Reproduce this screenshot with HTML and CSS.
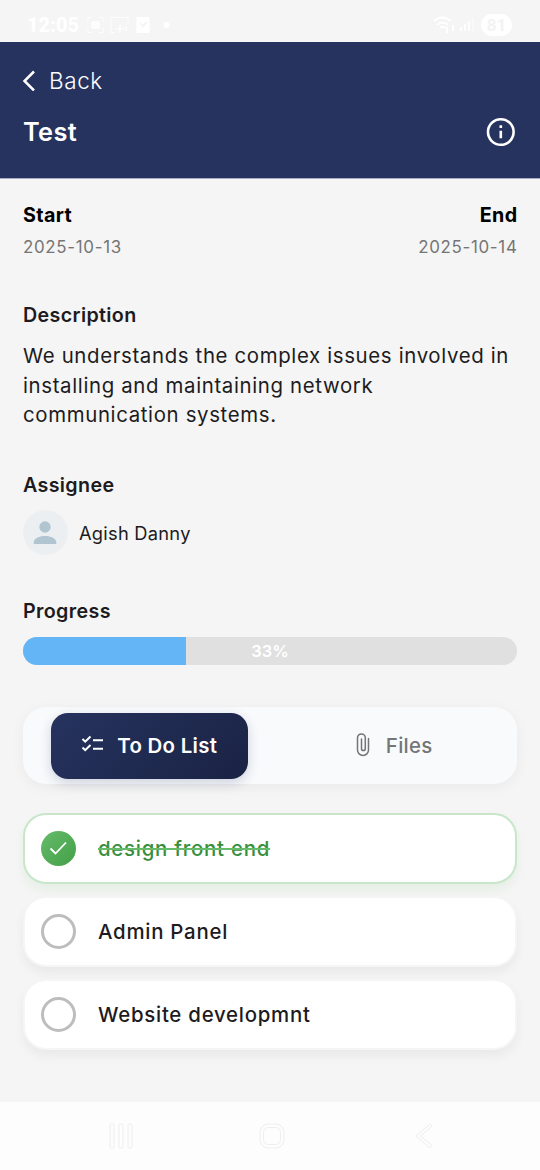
FILE: index.html
```html
<!DOCTYPE html>
<html lang="en">
<head>
<meta charset="utf-8">
<title>Test</title>
<link rel="stylesheet" href="styles.css">
</head>
<body>
<div class="status">
  <span class="clock">12:05</span>
  <svg class="status-icons" width="86" height="20" viewBox="0 0 86 20" fill="none" stroke="#fff" stroke-width="1.200">
    <g opacity=".8"><path d="M2 7V2.500h4M13 2.500h4V7M2 13v4.500h4M13 17.500h4V13"/><rect x="5.500" y="6.500" width="8" height="7" rx="2" fill="#fff"/>
    <path d="M25 14V2.500h17V9M25 14v3.500h4"/><path d="M34 10v8M30 14h8M40 11v5" stroke-width="1.700"/></g>
    <rect x="51" y="2.500" width="12" height="15" rx="1" fill="#fff"/><path d="M54 8l3 3 4-4" stroke="#f5f5f5" stroke-width="2"/>
    <circle cx="80.500" cy="10" r="2.500" fill="#fff"/>
  </svg>
  <span class="grow"></span>
  <svg class="signal" width="42" height="20" viewBox="0 0 42 20" fill="none" stroke="#fff" stroke-width="1.800">
    <path d="M1 6q8-7 17 0M4 10q5.500-5 11 0M7 13q3-2.500 6 0"/><path d="M14 12v6M20 10v6M28 12v4M32 9v7M36 6v10" /><path d="M40 3v13" opacity=".5"/>
  </svg>
  <span class="battery">81</span>
</div>
<header class="header">
  <div class="back">
    <svg width="14" height="22" viewBox="0 0 14 22" fill="none" stroke="#fff" stroke-width="2.500"><path d="M12 2.500L2.500 12l9.500 9.500"/></svg>
    <span>Back</span>
  </div>
  <div class="title-row">
    <h1 class="title">Test</h1>
    <svg width="30" height="30" viewBox="0 0 30 30" fill="none" stroke="#fff" stroke-width="2.600"><circle cx="14.800" cy="15" r="12.800"/><path d="M14.800 13.700v7.600M14.800 8.300v2.800"/></svg>
  </div>
</header>
<main class="main">
  <section class="dates">
    <div><h2 class="date-label">Start</h2><p class="date">2025-10-13</p></div>
    <div class="end"><h2 class="date-label">End</h2><p class="date">2025-10-14</p></div>
  </section>
  <section class="description">
    <h2 class="label">Description</h2>
    <p class="copy">We understands the complex issues involved in installing and maintaining network communication systems.</p>
  </section>
  <section class="assignee">
    <h2 class="label">Assignee</h2>
    <div class="person">
      <span class="avatar"><svg width="24" height="24" viewBox="0 0 24 24" fill="#b0c5cf"><circle cx="12" cy="6" r="5.700"/><path d="M.7 23v-1.500C.7 17.500 6 15 12 15s11.300 2.500 11.300 6.500V23z"/></svg></span>
      <span class="name">Agish Danny</span>
    </div>
  </section>
  <section class="progress">
    <h2 class="label">Progress</h2>
    <div class="bar"><div class="fill" style="width:33%"></div><span class="percent">33%</span></div>
  </section>
  <nav class="tabs">
    <div class="tab active">
      <svg width="24" height="20" viewBox="0 0 24 20" fill="none" stroke="#fff" stroke-width="2"><path d="M1.500 4l2.700 2.700L9.500 1.500M1.500 12.500l2.700 2.700L9.500 10M12 5.300H22M12 13.700H22"/></svg>
      <span>To Do List</span>
    </div>
    <div class="tab">
      <svg width="16" height="26" viewBox="0 0 16 26" fill="none" stroke="#757575" stroke-width="1.500" stroke-linecap="round"><path d="M13.500 6.500v11.500a5.500 5.500 0 0 1-11 0V5.800a3.900 3.900 0 0 1 7.800 0v10.900a1.900 1.900 0 0 1-3.800 0V7"/></svg>
      <span>Files</span>
    </div>
  </nav>
  <ul class="todos">
    <li class="todo done"><span class="check"><svg width="34" height="34" viewBox="0 0 34 34" fill="none" stroke="#fff" stroke-width="1.800"><path d="M9.500 17.500l5 5L25 11.500"/></svg></span><span class="task">design front end</span></li>
    <li class="todo"><span class="check"></span><span class="task">Admin Panel</span></li>
    <li class="todo"><span class="check"></span><span class="task">Website developmnt</span></li>
  </ul>
</main>
<footer class="navbar">
  <svg width="26" height="28" viewBox="0 0 26 28" fill="none" stroke="#eee"><rect x="2" y="2" width="4" height="24" rx="1.500"/><rect x="11" y="2" width="4" height="24" rx="1.500"/><rect x="20" y="2" width="4" height="24" rx="1.500"/></svg>
  <svg class="home" width="28" height="28" viewBox="0 0 28 28" fill="none" stroke="#eee"><rect x="2" y="2" width="24" height="24" rx="8"/><rect x="5.500" y="5.500" width="17" height="17" rx="5"/></svg>
  <svg width="20" height="28" viewBox="0 0 20 28" fill="none" stroke="#eee"><path d="M16 2L2 14l14 12 2-2.500L6.500 14 18 4z"/></svg>
</footer>
</body>
</html>
```
FILE: styles.css
```css
* { box-sizing: border-box; }
body { margin: 0; width: 540px; height: 1170px; display: flex; flex-direction: column; overflow: hidden; background: #f5f5f5; color: #1d1b20; font-family: Inter, "Liberation Sans", sans-serif; }
h1, h2, p, ul { margin: 0; padding: 0; }
svg { display: block; flex: none; }
.status { height: 42px; padding: 8px 28px 0 27px; display: flex; align-items: center; color: #fff; }
.clock { width: 59px; font: 800 20px/20px Roboto, sans-serif; }
.grow { flex: 1; }
.signal { margin-right: 6px; }
.battery { width: 31px; height: 22px; border-radius: 11px; background: #fff; color: #f3f3f3; font: 700 17px/22px Roboto, sans-serif; text-align: center; }
.header { height: 137px; padding: 23px 24px 0 22px; background: #26335f; border-bottom: 1px solid #a9adc0; color: #fff; }
.back { height: 30px; display: flex; align-items: center; gap: 13px; font-size: 22.500px; letter-spacing: .6px; font-weight: 350; }
.title-row { margin-top: 22px; height: 30px; display: flex; justify-content: space-between; align-items: center; }
.title { padding-left: 1px; font-size: 25.300px; line-height: 30px; height: 30px; font-weight: 600; letter-spacing: .4px; }
.main { flex: 1; padding: 21px 23px 0; }
.dates { height: 100px; display: flex; justify-content: space-between; }
.end { text-align: right; }
.date-label { height: 30px; font-size: 19.700px; line-height: 30px; font-weight: 700; color: #000; letter-spacing: .35px; }
.date { margin-top: 2px; font-size: 16.900px; line-height: 30px; color: #757575; letter-spacing: .7px; }
.end .date-label, .end .date { margin-right: -.5px; }
.label { font-size: 19.700px; line-height: 30px; font-weight: 600; letter-spacing: .35px; }
.description { height: 170px; }
.copy { margin-top: 11px; font-size: 20.400px; line-height: 29.500px; letter-spacing: .65px; }
.assignee { height: 126px; }
.person { display: flex; align-items: center; gap: 11.500px; margin: 10px 0 0 -.5px; font-size: 18.300px; }
.name { letter-spacing: .25px; }
.avatar { width: 45px; height: 45px; display: grid; place-items: center; border-radius: 50%; background: #eceff1; }
.progress { height: 111px; }
.bar { position: relative; height: 28px; margin-top: 11px; border-radius: 14px; overflow: hidden; background: #e0e0e0; }
.fill { height: 100%; background: #64b5f6; }
.percent { position: absolute; inset: 0; text-align: center; color: #fff; font-size: 16.500px; line-height: 28px; font-weight: 600; }
.tabs { height: 77px; padding: 6px 28px 5px; display: flex; gap: 45px; border-radius: 23px; background: #f8fafc; box-shadow: 0 3px 14px rgba(0,0,0,.05); }
.tab { width: 197px; padding: 0 0 2px 6px; display: flex; align-items: center; justify-content: center; gap: 15px; border-radius: 17px; color: #757575; font-size: 20.400px; font-weight: 500; letter-spacing: .3px; }
.active { padding-left: 0; gap: 12px; color: #fff; font-weight: 600; background: linear-gradient(135deg, #26335f, #1a2344); box-shadow: 0 4px 12px rgba(38,51,95,.2); }
.todos { margin-top: 29px; list-style: none; display: flex; flex-direction: column; gap: 12px; }
.todo { height: 71px; padding-left: 16px; display: flex; align-items: center; gap: 22px; border: 2px solid #f5f5f5; border-radius: 23px; background: #fff; box-shadow: 0 6px 11px rgba(0,0,0,.05); font-size: 20.400px; font-weight: 500; letter-spacing: .75px; }
.check { width: 35px; height: 35px; border: 3px solid #bdbdbd; border-radius: 50%; }
.done { border-color: #c8e6c9; color: #388e3c; box-shadow: 0 6px 11px rgba(76,175,80,.09); }
.done .check { border: 0; background: linear-gradient(135deg, #66bb6a, #43a047); }
.done .task { text-decoration: line-through #66bb6a 1.500px; }
.navbar { height: 68px; padding: 0 106px 0 108px; display: flex; align-items: center; justify-content: space-between; background: #fdfdfd; }
.home { margin-right: 5px; }
```
